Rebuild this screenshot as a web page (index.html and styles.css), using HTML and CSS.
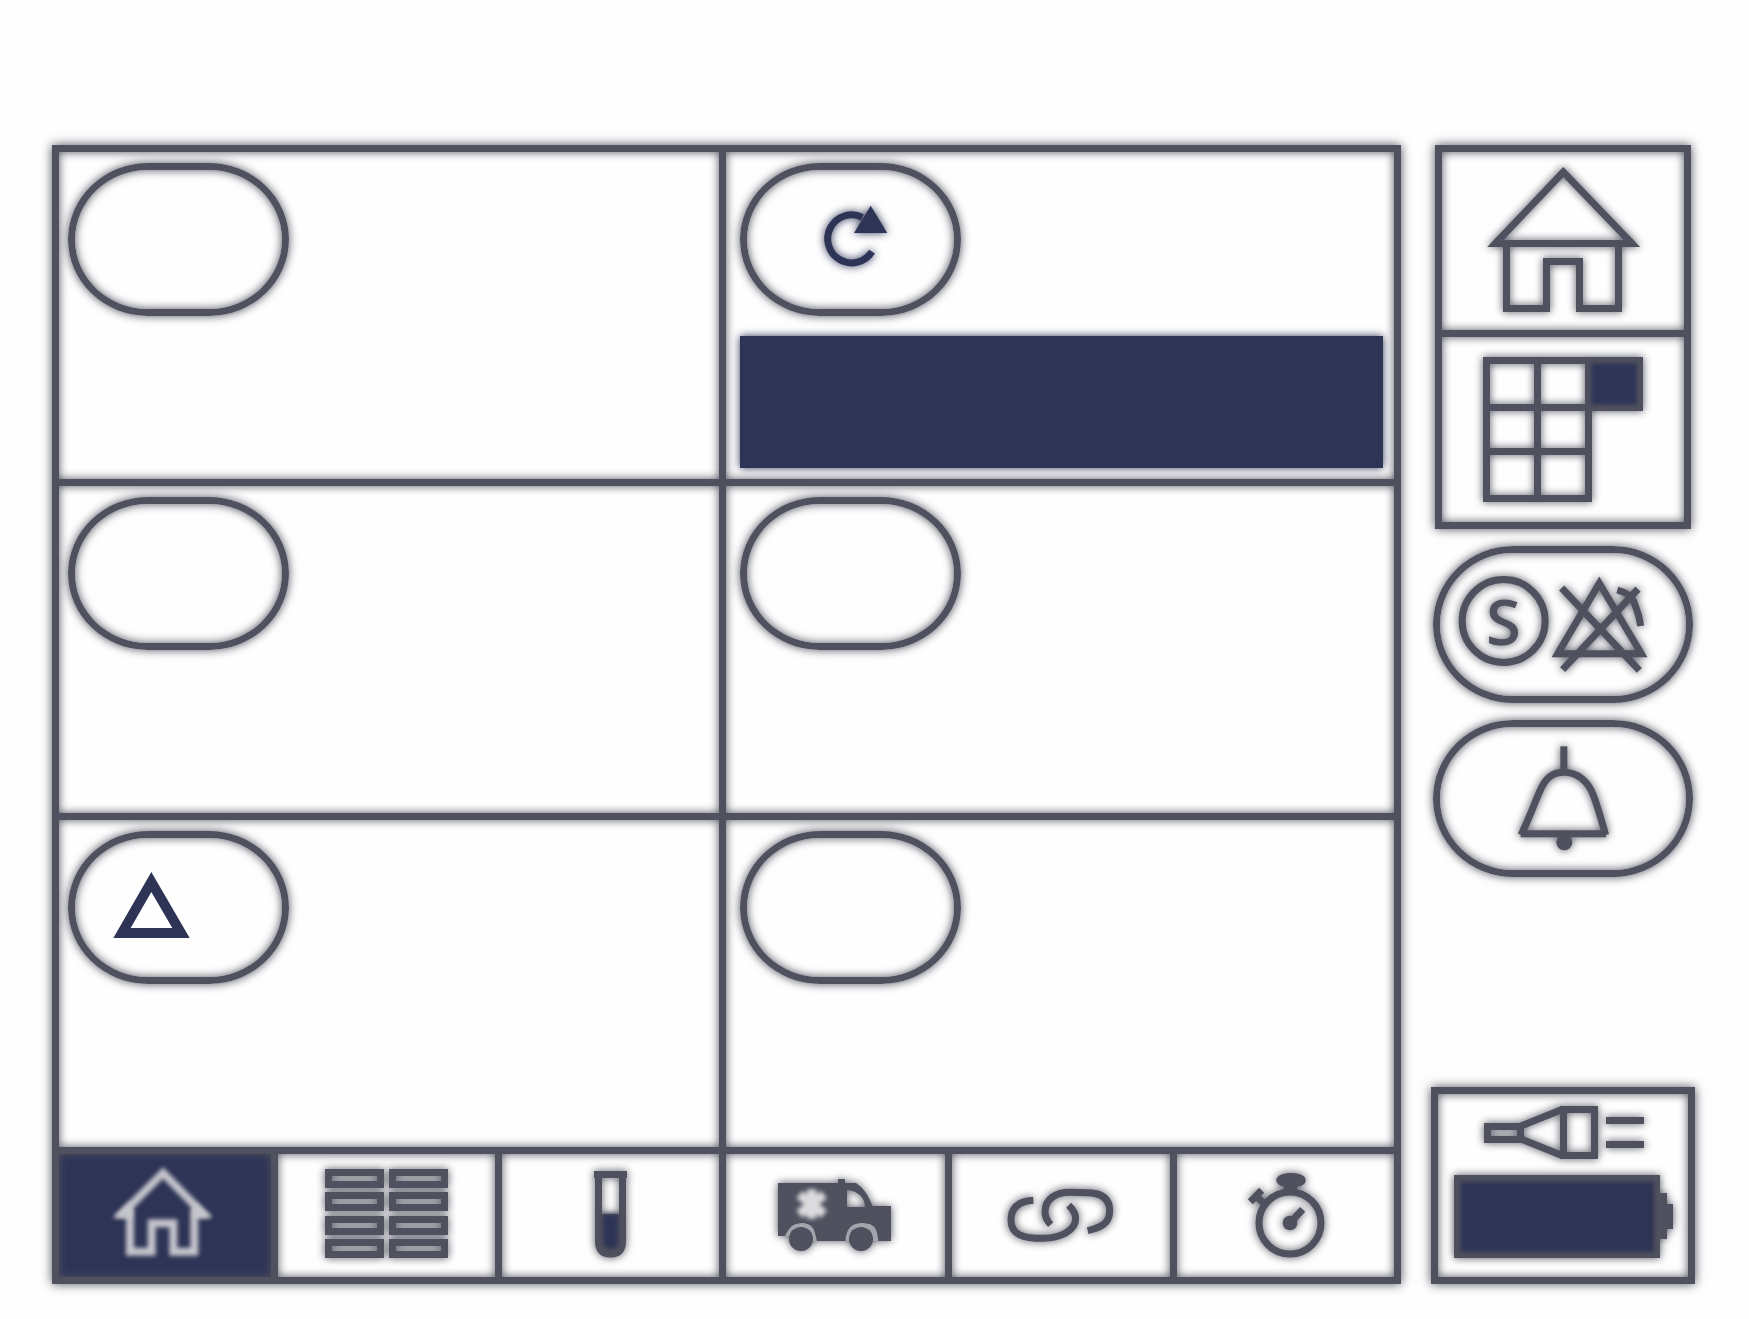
FILE: index.html
```html
<!DOCTYPE html>
<html lang="en">
<head>
<meta charset="utf-8">
<meta name="viewport" content="width=device-width, initial-scale=1">
<title>Monitor</title>
<link rel="stylesheet" href="styles.css">
</head>
<body>
<div class="device">
  <main class="panel">
    <div class="channels">
      <section class="channel"><button class="pill" aria-label="Channel 1"></button></section>
      <section class="channel channel-right">
        <button class="pill" aria-label="Restart channel 2">
          <svg class="icon navy" width="207" height="139" viewBox="144 123 621 417">
            <path class="stroke" d="M519 368A72 72 0 1 1 490 265"/>
            <path class="fill" d="M515 230L565 312H465Z"/>
          </svg>
        </button>
        <div class="bar"></div>
      </section>
      <section class="channel"><button class="pill" aria-label="Channel 3"></button></section>
      <section class="channel channel-right"><button class="pill" aria-label="Channel 4"></button></section>
      <section class="channel">
        <button class="pill" aria-label="Channel 5">
          <svg class="icon navy flat" width="207" height="139" viewBox="105 114 621 417">
            <path class="fill" fill-rule="evenodd" d="M334 216L449 414H220ZM334 276L272 384H397Z"/>
          </svg>
        </button>
      </section>
      <section class="channel channel-right"><button class="pill" aria-label="Channel 6"></button></section>
    </div>
    <nav class="tabs">
      <button class="tab active" aria-label="Home">
        <svg class="icon flat" width="212" height="123" viewBox="57 72 636 369">
          <path class="stroke pale" d="M369 129L248 250H270V365H335V280H400V365H463V250H488Z"/>
          <path class="wing" d="M222 264L274 214V264ZM514 264L460 214V264Z"/>
        </svg>
      </button>
      <button class="tab" aria-label="List">
        <svg class="icon" width="217" height="123" viewBox="714 72 651 369">
          <g class="stroke">
            <path d="M865.500 127.500h156v36h-156zM865.500 196.500h156v36h-156zM865.500 268.500h156v36h-156zM865.500 337.500h156v36h-156z"/>
            <path d="M1057.500 127.500h156v36h-156zM1057.500 196.500h156v36h-156zM1057.500 268.500h156v36h-156zM1057.500 337.500h156v36h-156z"/>
          </g>
        </svg>
      </button>
      <button class="tab" aria-label="Sample">
        <svg class="icon" width="217" height="123" viewBox="66 72 651 369">
          <path class="stroke" d="M342 133.500H441M355.500 133.500V332C355.500 361 370 372 391.500 372C413 372 427.500 361 427.500 332V133.500"/>
          <path class="fill" d="M360 252H423V340L410 370H373L360 340Z"/>
          <path class="core" d="M368 253H415V335Q413 356 391 356Q370 356 368 335Z"/>
        </svg>
      </button>
      <button class="tab" aria-label="Transport">
        <svg class="icon" width="219" height="123" viewBox="738 72 657 369">
          <path class="arch" d="M915 318C925 295 938 279 965 279C1000 279 1005 300 1011 333H990V300H935V318ZM1096 333C1098 300 1110 279 1145 279C1180 279 1193 290 1195 333H1170V300H1115V333Z"/>
          <path class="fill" fill-rule="evenodd" d="M894 159H1074V147H1095V159H1128C1152 175 1168 200 1177 228H1233V333H1195C1193 290 1180 279 1145 279C1110 279 1098 300 1096 333H1011C1005 300 1000 279 965 279C938 279 925 295 915 318H894ZM1101 180V231H1155C1155 205 1135 182 1101 180Z"/>
          <circle class="fill" cx="963" cy="327" r="36"/>
          <circle class="fill" cx="1143" cy="327" r="36"/>
          <path class="star" d="M995 178V266M958 194L1032 252M1032 194L958 252"/>
        </svg>
      </button>
      <button class="tab" aria-label="Link">
        <svg class="icon" width="218" height="123" viewBox="96 72 654 369">
          <g class="stroke">
            <path d="M340 211C295 214 273 234 273 270C273 315 310 325 370 325C420 325 467 303 467 265C467 250 458 238 446 226"/>
            <path d="M392 284C380 271 375 260 375 245C375 205 410 187 450 187L500 188C545 188 569 205 569 243C569 280 543 293 503 302"/>
          </g>
        </svg>
      </button>
      <button class="tab" aria-label="Timer">
        <svg class="icon" width="217" height="123" viewBox="771 72 651 369">
          <g class="stroke">
            <circle cx="1110" cy="279" r="93"/>
            <path d="M991 215L1025 181M1008 198L1037 225M1110 279L1148 238"/>
          </g>
          <path class="fill" d="M1069 150C1069 122 1157 122 1157 150C1157 162 1147 168 1131 170V185H1092V170C1078 167 1069 160 1069 150Z"/>
          <circle class="fill" cx="1110" cy="279" r="22"/>
        </svg>
      </button>
    </nav>
  </main>
  <aside class="side">
    <div class="stack">
      <button class="cell" aria-label="Main screen">
        <svg class="icon" width="242" height="178" viewBox="69 66 726 534">
          <g class="stroke">
            <path d="M433 126L229 340.500H639Z"/>
            <path d="M262.500 345V535.500H382.500V394.500H481.500V535.500H598.500V345"/>
          </g>
        </svg>
      </button>
      <button class="cell" aria-label="Layout">
        <svg class="icon" width="242" height="185" viewBox="69 51 726 555">
          <path class="stroke" d="M202.500 121.500H508.500V535.500H202.500ZM355.500 121.500V535.500M202.500 262.500H508.500M202.500 394.500H508.500"/>
          <path class="fill" d="M500 111H672V273H500Z"/>
          <path class="core" d="M517 130H653V254H517Z"/>
        </svg>
      </button>
    </div>
    <button class="pill wide" aria-label="Silence alarm">
      <svg class="icon" width="246" height="143" viewBox="62 67 738 429">
        <g class="stroke">
          <circle cx="253" cy="271" r="124.500"/>
          <path d="M540 158L415 369.500H666Z"/>
          <path d="M427 172L660 419M656 175L430 417"/>
          <path d="M594 178C628 188 641 200 649 228Q660 255 664 286"/>
        </g>
        <text class="letter" x="252" y="343" text-anchor="middle">S</text>
      </svg>
    </button>
    <button class="pill wide" aria-label="Alarm bell">
      <svg class="icon" width="246" height="143" viewBox="59 56 738 429">
        <g class="stroke">
          <path d="M430.500 114V192"/>
          <path stroke-linejoin="bevel" d="M301 376.500H557M302 380C325 335 348 270 358 250C374 210 395 192 431 192C470 192 502 218 518 258C532 293 546 345 556 380"/>
        </g>
        <circle class="fill" cx="432" cy="402" r="24"/>
      </svg>
    </button>
    <div class="power">
      <svg class="icon" width="250" height="183" viewBox="54 69 750 549" role="img" aria-label="Mains power, battery full">
        <g class="stroke">
          <path d="M202.500 166.500H301.500V205.500H202.500Z"/>
          <path d="M301 166L430 114M301 203L430 255"/>
          <path d="M430.500 115.500H523.500V253.500H430.500Z"/>
          <path d="M558 148.500H672M558 220.500H672"/>
        </g>
        <path class="fill" d="M102 312H720V366H741V399H759V474H741V504H720V561H102Z"/>
        <path class="core" d="M122 332H702V542H122Z"/>
      </svg>
    </div>
  </aside>
</div>
</body>
</html>
```
FILE: styles.css
```css
:root {
  --line: #50515e;
  --navy: #2e3456;
  --paper: #fefefe;
  --w: 7px;
  --glow: 0 0 10px #50515e;
}

* {
  box-sizing: border-box;
}

body {
  margin: 0;
  background: var(--paper);
}

button {
  margin: 0;
  padding: 0;
  border: 0;
  background: none;
  cursor: pointer;
}

.device {
  display: flex;
  gap: 30px;
  min-height: 100vh;
  padding: 145px 54px 35px 52px;
}

.panel {
  flex: 1;
  min-width: 0;
  display: grid;
  grid-template-rows: 1fr 123px;
  gap: var(--w);
  padding: var(--w);
  background: var(--line);
  box-shadow: var(--glow);
}

.channels {
  display: grid;
  grid-template-columns: minmax(0, 660fr) minmax(0, 668fr);
  grid-template-rows: repeat(3, 1fr);
  gap: var(--w);
}

.channel {
  display: flex;
  flex-direction: column;
  gap: 20px;
  padding: 11px 11px 11px 9px;
  background: var(--paper);
  box-shadow: inset var(--glow);
}

.channel-right {
  padding-left: 14px;
}

.pill {
  flex: none;
  display: grid;
  place-items: center;
  width: 221px;
  height: 153px;
  border: var(--w) solid var(--line);
  border-radius: 80px / 50%;
  box-shadow: var(--glow), inset var(--glow);
}

.bar {
  flex: 1;
  background: var(--navy);
  box-shadow: 0 0 8px var(--navy);
}

.tabs {
  display: grid;
  grid-template-columns: 212fr 217fr 217fr 219fr 218fr 217fr;
  gap: var(--w);
}

.tab,
.cell {
  display: grid;
  place-items: center;
  min-width: 0;
  background: var(--paper);
  box-shadow: inset var(--glow);
}

.tab.active {
  background: var(--navy);
  box-shadow: inset 0 0 10px var(--line);
}

.side {
  flex: none;
  display: flex;
  flex-direction: column;
  align-items: center;
  gap: 17px;
  width: 264px;
}

.stack {
  display: grid;
  gap: var(--w);
  width: 256px;
  padding: var(--w);
  background: var(--line);
  box-shadow: var(--glow);
}

.pill.wide {
  width: 260px;
  height: 157px;
}

.power {
  width: 100%;
  margin-top: auto;
  border: var(--w) solid var(--line);
  box-shadow: var(--glow), inset var(--glow);
}

.icon {
  display: block;
  max-width: 100%;
  overflow: visible;
  color: var(--line);
  filter: drop-shadow(0 0 4px currentColor);
}

.icon.navy {
  color: var(--navy);
}

.icon.flat {
  filter: none;
}

.stroke {
  fill: none;
  stroke: currentColor;
  stroke-width: 21px;
}

.fill {
  fill: currentColor;
}

.core {
  fill: var(--navy);
  filter: blur(7px);
}

.pale {
  stroke: #c4c4cb;
  stroke-width: 24px;
  filter: blur(7px);
}

.wing {
  fill: #c4c4cb;
  filter: blur(7px);
}

.arch {
  fill: #a3a3ab;
}

.star {
  fill: none;
  stroke: #dcdcde;
  stroke-width: 28px;
  filter: blur(7px);
}

.letter {
  fill: currentColor;
  font: 600 190px "Open Sans", "Noto Sans", sans-serif;
}
```
